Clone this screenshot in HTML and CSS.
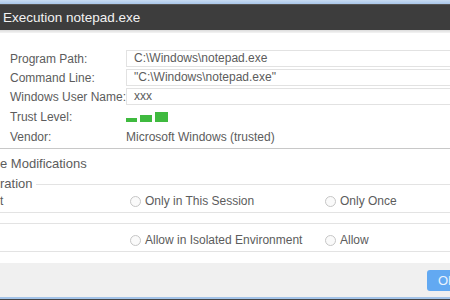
FILE: index.html
```html
<!DOCTYPE html>
<html lang="en">
  <head>
    <meta charset="utf-8" />
    <title>Execution notepad.exe</title>
    <link rel="stylesheet" href="styles.css">
  </head>
  <body>
    <div class="window">
      <div class="frame-top"></div>
      <div class="titlebar">Execution notepad.exe</div>
      <div class="title-edge"></div>

      <div class="content">
        <div class="info">
          <div class="label">Program Path:</div>
          <div class="field">C:\Windows\notepad.exe</div>
          <div class="label">Command Line:</div>
          <div class="field">"C:\Windows\notepad.exe"</div>
          <div class="label">Windows User Name:</div>
          <div class="field">xxx</div>
          <div class="label">Trust Level:</div>
          <div class="trust">
            <span class="bar bar-1"></span>
            <span class="bar bar-2"></span>
            <span class="bar bar-3"></span>
          </div>
          <div class="label">Vendor:</div>
          <div class="value">Microsoft Windows (trusted)</div>
        </div>

        <div class="section">
          <div class="heading">e Modifications</div>

          <div class="group">
            <div class="legend"><span>ration</span><span class="legend-line"></span></div>
            <div class="options">
              <span class="cut">t</span>
              <label class="radio"><span class="circle"></span>Only in This Session</label>
              <label class="radio"><span class="circle"></span>Only Once</label>
            </div>
          </div>

          <div class="group group-plain">
            <div class="options">
              <span class="cut"></span>
              <label class="radio"><span class="circle"></span>Allow in Isolated Environment</label>
              <label class="radio"><span class="circle"></span>Allow</label>
            </div>
          </div>
        </div>
      </div>

      <div class="footer">
        <button class="ok">OK</button>
      </div>
      <div class="frame-bottom"></div>
    </div>
  </body>
</html>
```

FILE: styles.css
```css
html, body {
  margin: 0;
  height: 100%;
  overflow: hidden;
}

body {
  font-family: "Liberation Sans", Arial, sans-serif;
  font-size: 12px;
  color: #5c5c5c;
  background: #ffffff;
}

.window {
  display: flex;
  flex-direction: column;
  height: 300px;
}

.frame-top {
  height: 4px;
  background: linear-gradient(#c9dcf1, #a9c7ea);
}

.titlebar {
  height: 26px;
  line-height: 25px;
  padding-left: 3px;
  background: #3d3d3d;
  border-top: 1px solid #555;
  color: #f2f2f2;
  font-size: 13.5px;
  box-sizing: border-box;
}

.title-edge {
  height: 3px;
  background: linear-gradient(#dcdcdc, #f4f4f4);
}

.content {
  flex: 1;
  padding-top: 17px;
}

.info {
  display: grid;
  grid-template-columns: 116px 1fr;
  grid-template-rows: 17px 17px 17px 19px 17px;
  row-gap: 2px;
  padding-left: 10px;
  align-items: center;
  padding-bottom: 3px;
  border-bottom: 1px solid #c8c8c8;
}

.label {
  white-space: nowrap;
}

.field {
  height: 17px;
  line-height: 15px;
  box-sizing: border-box;
  border: 1px solid #e2e2e2;
  border-right: none;
  padding-left: 7px;
}

.value {
  white-space: nowrap;
}

.trust {
  display: flex;
  align-items: flex-end;
  gap: 3px;
  height: 19px;
  padding-bottom: 4px;
  box-sizing: border-box;
}

.bar {
  display: block;
  background: #3fba3f;
}

.bar-1 { width: 11px; height: 4px; }
.bar-2 { width: 12px; height: 7px; }
.bar-3 { width: 13px; height: 10px; }

.section {
  padding-top: 7px;
}

.heading {
  font-size: 13px;
  line-height: 16px;
}

.group {
  margin-top: 4px;
  border-bottom: 1px solid #e3e3e3;
}

.group-plain {
  margin-top: 10px;
  border-top: 1px solid #e3e3e3;
  padding-top: 7px;
}

.legend {
  display: flex;
  align-items: center;
  font-size: 13px;
  line-height: 16px;
}

.legend-line {
  flex: 1;
  margin-left: 3px;
  border-top: 1px solid #e3e3e3;
}

.options {
  display: grid;
  grid-template-columns: 130px 195px 1fr;
  line-height: 18px;
  padding: 0 0 2px;
}

.radio {
  display: flex;
  align-items: center;
  white-space: nowrap;
}

.circle {
  width: 9px;
  height: 9px;
  border: 1px solid #c6c6c6;
  border-radius: 50%;
  margin-right: 4px;
  background: #fafafa;
}

.footer {
  height: 34px;
  background: #f0f0f0;
  display: flex;
  align-items: center;
  justify-content: flex-end;
  margin-top: 10px;
}

.ok {
  width: 40px;
  height: 21px;
  margin-right: -17px;
  border: none;
  border-radius: 3px;
  background: #62a9f2;
  color: #eaf3fd;
  font-family: inherit;
  font-size: 13px;
  text-align: left;
  padding-left: 11px;
}

.frame-bottom {
  height: 3px;
  background: linear-gradient(#a3c3e8 0, #a3c3e8 2px, #444 2px);
}
```
